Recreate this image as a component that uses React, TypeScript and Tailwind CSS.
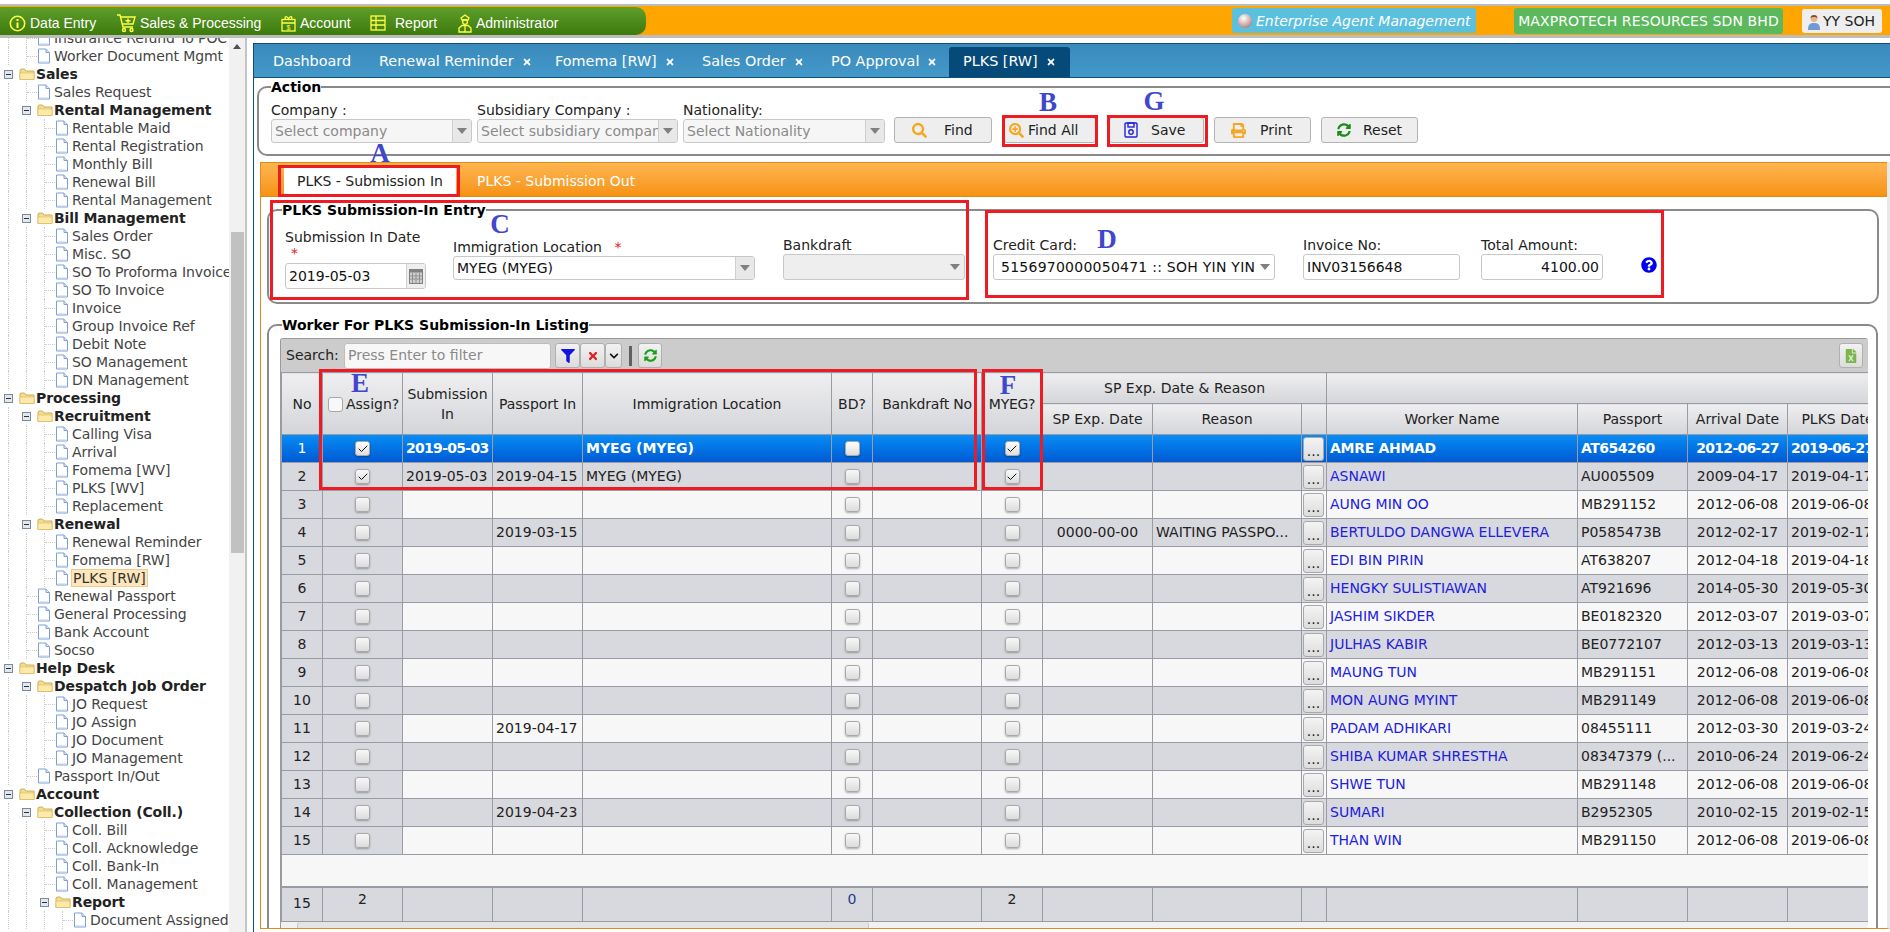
import { Check } from "lucide-react";
import {
  FaChevronDown,
  FaFileExcel,
  FaFilter,
  FaPrint,
  FaQuestionCircle,
  FaSearch,
  FaSearchPlus,
  FaSyncAlt,
  FaTimes,
} from "react-icons/fa";
import type { ReactNode } from "react";

const SANS = "[font-family:'DejaVu_Sans',sans-serif]";

type TreeRow = { label: string; depth: number; folder?: boolean; selected?: boolean };

const TREE: TreeRow[] = [
  { label: "Insurance Refund To POC", depth: 1 },
  { label: "Worker Document Mgmt", depth: 1 },
  { label: "Sales", depth: 0, folder: true },
  { label: "Sales Request", depth: 1 },
  { label: "Rental Management", depth: 1, folder: true },
  { label: "Rentable Maid", depth: 2 },
  { label: "Rental Registration", depth: 2 },
  { label: "Monthly Bill", depth: 2 },
  { label: "Renewal Bill", depth: 2 },
  { label: "Rental Management", depth: 2 },
  { label: "Bill Management", depth: 1, folder: true },
  { label: "Sales Order", depth: 2 },
  { label: "Misc. SO", depth: 2 },
  { label: "SO To Proforma Invoice", depth: 2 },
  { label: "SO To Invoice", depth: 2 },
  { label: "Invoice", depth: 2 },
  { label: "Group Invoice Ref", depth: 2 },
  { label: "Debit Note", depth: 2 },
  { label: "SO Management", depth: 2 },
  { label: "DN Management", depth: 2 },
  { label: "Processing", depth: 0, folder: true },
  { label: "Recruitment", depth: 1, folder: true },
  { label: "Calling Visa", depth: 2 },
  { label: "Arrival", depth: 2 },
  { label: "Fomema [WV]", depth: 2 },
  { label: "PLKS [WV]", depth: 2 },
  { label: "Replacement", depth: 2 },
  { label: "Renewal", depth: 1, folder: true },
  { label: "Renewal Reminder", depth: 2 },
  { label: "Fomema [RW]", depth: 2 },
  { label: "PLKS [RW]", depth: 2, selected: true },
  { label: "Renewal Passport", depth: 1 },
  { label: "General Processing", depth: 1 },
  { label: "Bank Account", depth: 1 },
  { label: "Socso", depth: 1 },
  { label: "Help Desk", depth: 0, folder: true },
  { label: "Despatch Job Order", depth: 1, folder: true },
  { label: "JO Request", depth: 2 },
  { label: "JO Assign", depth: 2 },
  { label: "JO Document", depth: 2 },
  { label: "JO Management", depth: 2 },
  { label: "Passport In/Out", depth: 1 },
  { label: "Account", depth: 0, folder: true },
  { label: "Collection (Coll.)", depth: 1, folder: true },
  { label: "Coll. Bill", depth: 2 },
  { label: "Coll. Acknowledge", depth: 2 },
  { label: "Coll. Bank-In", depth: 2 },
  { label: "Coll. Management", depth: 2 },
  { label: "Report", depth: 2, folder: true },
  { label: "Document Assigned", depth: 3 },
];

type Worker = {
  name: string;
  passport: string;
  arrival: string;
  plks: string;
  passportIn?: string;
  spDate?: string;
  reason?: string;
};

const WORKERS: Worker[] = [
  { name: "AMRE AHMAD", passport: "AT654260", arrival: "2012-06-27", plks: "2019-06-27" },
  { name: "ASNAWI", passport: "AU005509", arrival: "2009-04-17", plks: "2019-04-17", passportIn: "2019-04-15" },
  { name: "AUNG MIN OO", passport: "MB291152", arrival: "2012-06-08", plks: "2019-06-08" },
  {
    name: "BERTULDO DANGWA ELLEVERA",
    passport: "P0585473B",
    arrival: "2012-02-17",
    plks: "2019-02-17",
    passportIn: "2019-03-15",
    spDate: "0000-00-00",
    reason: "WAITING PASSPO...",
  },
  { name: "EDI BIN PIRIN", passport: "AT638207", arrival: "2012-04-18", plks: "2019-04-18" },
  { name: "HENGKY SULISTIAWAN", passport: "AT921696", arrival: "2014-05-30", plks: "2019-05-30" },
  { name: "JASHIM SIKDER", passport: "BE0182320", arrival: "2012-03-07", plks: "2019-03-07" },
  { name: "JULHAS KABIR", passport: "BE0772107", arrival: "2012-03-13", plks: "2019-03-13" },
  { name: "MAUNG TUN", passport: "MB291151", arrival: "2012-06-08", plks: "2019-06-08" },
  { name: "MON AUNG MYINT", passport: "MB291149", arrival: "2012-06-08", plks: "2019-06-08" },
  { name: "PADAM ADHIKARI", passport: "08455111", arrival: "2012-03-30", plks: "2019-03-24", passportIn: "2019-04-17" },
  { name: "SHIBA KUMAR SHRESTHA", passport: "08347379 (...", arrival: "2010-06-24", plks: "2019-06-24" },
  { name: "SHWE TUN", passport: "MB291148", arrival: "2012-06-08", plks: "2019-06-08" },
  { name: "SUMARI", passport: "B2952305", arrival: "2010-02-15", plks: "2019-02-15", passportIn: "2019-04-23" },
  { name: "THAN WIN", passport: "MB291150", arrival: "2012-06-08", plks: "2019-06-08" },
];

const COLS = [41, 80, 90, 90, 249, 41, 109, 61, 110, 149, 25, 251, 110, 100, 100];

function FolderIcon() {
  return (
    <svg width="16" height="14" viewBox="0 0 16 14" className="shrink-0">
      <path d="M1 3 L1 12.5 L15 12.5 L15 4 L7 4 L5.5 2 L2 2 Z" fill="#f6dc8a" stroke="#cfae55" />
      <path d="M1 6 L15 6 L15 12.5 L1 12.5 Z" fill="#fbeaa9" stroke="#d8b964" strokeWidth="0.6" />
    </svg>
  );
}

function FileIcon() {
  return (
    <svg width="14" height="16" viewBox="0 0 14 16" className="shrink-0">
      <path d="M1.5 1 L9 1 L12.5 4.5 L12.5 15 L1.5 15 Z" fill="#ffffff" stroke="#7f9fd6" />
      <path d="M9 1 L9 4.5 L12.5 4.5" fill="#dbe6f8" stroke="#7f9fd6" />
      <path d="M2.5 14 L11.5 14" stroke="#bcd0ee" />
    </svg>
  );
}

function TreeItem({ row }: { row: TreeRow }) {
  return (
    <div className="flex h-[18px] items-center whitespace-nowrap">
      {Array.from({ length: row.depth }).map((_, i) => (
        <span key={i} className="h-full w-[18px] shrink-0 pl-[8px]">
          <span className="block h-full w-px border-l border-dotted border-[#cccccc]" />
        </span>
      ))}
      <span className="flex h-full w-[18px] shrink-0 items-center pl-[4px]">
        {row.folder ? (
          <span className="flex h-[9px] w-[9px] items-center justify-center border border-[#7a8a99] bg-[#e4e8ec]">
            <span className="h-px w-[5px] bg-[#223344]" />
          </span>
        ) : (
          <span className="ml-[4px] flex h-full items-center border-l border-dotted border-[#cccccc]">
            <span className="w-[10px] border-t border-dotted border-[#cccccc]" />
          </span>
        )}
      </span>
      <span className="flex w-[18px] shrink-0 items-center pl-px">
        {row.folder ? <FolderIcon /> : <FileIcon />}
      </span>
      <span
        className={
          row.folder
            ? "text-[14px] font-bold tracking-[-0.1px] text-[#222222]"
            : row.selected
              ? "-ml-px border border-[#f5c98a] bg-[#fde6bb] px-px text-[14px] leading-[16px] text-[#333333]"
              : "text-[14px] tracking-[-0.1px] text-[#444444]"
        }
      >
        {row.label}
      </span>
    </div>
  );
}

function Sidebar() {
  return (
    <aside className="flex h-full w-[245px] shrink-0 overflow-hidden">
      <div className="h-full w-[229px] shrink-0 overflow-hidden">
        <div className="-mt-[9px]">
          {TREE.map((row, i) => (
            <TreeItem key={i} row={row} />
          ))}
        </div>
      </div>
      <div className="flex h-full w-[16px] shrink-0 flex-col items-center bg-[#f1f1f1]">
        <span className="mt-[6px] h-0 w-0 border-x-[4px] border-b-[5px] border-x-transparent border-b-[#505050]" />
        <span className="mt-[183px] h-[321px] w-[13px] bg-[#c1c1c1]" />
      </div>
    </aside>
  );
}

function MenuItem({ icon, label, className }: { icon: ReactNode; label: string; className: string }) {
  return (
    <span className={`flex items-center gap-[4px] ${className}`}>
      {icon}
      <span>{label}</span>
    </span>
  );
}

function TopBar() {
  const y = "#ffff44";
  return (
    <header className="mt-[4px] flex h-[34px] shrink-0 items-center border-t-[2px] border-b-[3px] border-[#bdbdbd] bg-[#ffa500]">
      <nav className="flex h-[28px] w-[646px] shrink-0 items-center rounded-r-[10px] bg-gradient-to-b from-[#5f9f2a] to-[#3c7a0c] pl-[9px] pt-[5px] font-['Liberation_Sans',sans-serif] text-[14px] text-white">
        <MenuItem
          className="w-[107px]"
          label="Data Entry"
          icon={
            <svg width="17" height="17" viewBox="0 0 17 17">
              <circle cx="8.5" cy="8.5" r="7.2" fill="none" stroke={y} strokeWidth="1.5" />
              <path d="M8.5 7.5 V13 M8.5 4 V6" stroke={y} strokeWidth="2" />
            </svg>
          }
        />
        <MenuItem
          className="w-[165px]"
          label="Sales & Processing"
          icon={
            <svg width="20" height="20" viewBox="0 0 20 20" fill="none" stroke={y} strokeWidth="1.4">
              <path d="M1 2 H4 L7 14 H17" />
              <path d="M5 4 H19 L17 11 H6.5" />
              <path d="M12 5.5 V10 M9.5 7.7 H14.5" />
              <circle cx="8" cy="17" r="1.5" />
              <circle cx="15.5" cy="17" r="1.5" />
            </svg>
          }
        />
        <MenuItem
          className="w-[89px]"
          label="Account"
          icon={
            <svg width="15" height="17" viewBox="0 0 15 17" fill="none" stroke={y} strokeWidth="1.3">
              <rect x="1" y="4.5" width="13" height="11.5" />
              <path d="M1 8 H14 M4.5 4.5 C3 1 6 0.5 7.5 4 C9 0.5 12 1 10.5 4.5" />
              <text x="7.5" y="14.5" fontSize="7" textAnchor="middle" fill={y} stroke="none">
                $
              </text>
            </svg>
          }
        />
        <MenuItem
          className="w-[88px] gap-[9px]"
          label="Report"
          icon={
            <svg width="16" height="16" viewBox="0 0 16 16" fill="none" stroke={y} strokeWidth="1.3">
              <rect x="1" y="1" width="14" height="14" />
              <path d="M1 5.5 H15 M1 10 H15 M6 1 V15" />
            </svg>
          }
        />
        <MenuItem
          className=""
          label="Administrator"
          icon={
            <svg width="14" height="19" viewBox="0 0 14 19" fill="none" stroke={y} strokeWidth="1.3">
              <path d="M3 4 L7 1 L11 4 L10 6 H4 Z" />
              <circle cx="7" cy="8" r="2.4" />
              <path d="M1 18 V14 L4 11.5 H10 L13 14 V18 Z M7 11.5 V18" />
            </svg>
          }
        />
      </nav>
      <span className="ml-[586px] flex h-[25px] w-[244px] shrink-0 items-center gap-[4px] rounded-[3px] bg-[#5bc0de] pl-[6px] text-[14px] italic text-white">
        <span className="h-[14px] w-[14px] shrink-0 rounded-full bg-[radial-gradient(circle_at_40%_30%,#ffffff,#c9a0a0_60%,#8a5a5a)]" />
        <span className="whitespace-nowrap pt-[2px]">Enterprise Agent Management</span>
      </span>
      <span className="ml-[38px] flex h-[26px] w-[269px] shrink-0 items-center justify-center whitespace-nowrap rounded-[3px] bg-[#5cb85c] pt-[2px] text-[14px] tracking-[0.1px] text-white">
        MAXPROTECH RESOURCES SDN BHD
      </span>
      <span className="ml-[19px] flex h-[24px] w-[80px] shrink-0 items-center gap-[2px] rounded-[3px] bg-[#eeeeee] pl-[5px] pt-[1px] text-[14px] text-[#222222]">
        <svg width="14" height="17" viewBox="0 0 14 17" className="shrink-0">
          <path d="M1 17 C1 11 3 10 7 10 C11 10 13 11 13 17 Z" fill="#6f9ad6" />
          <circle cx="7" cy="5.5" r="3.4" fill="#eab38c" />
          <path d="M3.5 5 C3.5 1 10.5 1 10.5 5 C9 3.5 5 3.5 3.5 5 Z" fill="#8a4b22" />
        </svg>
        YY SOH
      </span>
    </header>
  );
}

const TABS: { label: string; w: string; close?: boolean }[] = [
  { label: "Dashboard", w: "w-[106px]" },
  { label: "Renewal Reminder", w: "w-[176px]", close: true },
  { label: "Fomema [RW]", w: "w-[147px]", close: true },
  { label: "Sales Order", w: "w-[129px]", close: true },
  { label: "PO Approval", w: "w-[118px]", close: true },
];

function TabBar() {
  return (
    <div className="flex h-[35px] shrink-0 items-end border-y border-[#0d4f7c] bg-gradient-to-b from-[#3a8abc] to-[#4399c9] pl-[19px] text-[14.4px] text-white">
      {TABS.map((t) => (
        <span key={t.label} className={`flex h-full items-center gap-[8px] whitespace-nowrap pt-[2px] ${t.w}`}>
          {t.label}
          {t.close && <FaTimes className="h-[10px] w-[10px]" />}
        </span>
      ))}
      <span className="flex h-[30px] w-[121px] items-center gap-[8px] whitespace-nowrap rounded-t-[3px] bg-[#054a78] pl-[14px]">
        PLKS [RW]
        <FaTimes className="h-[10px] w-[10px]" />
      </span>
    </div>
  );
}

function SelectBox({
  value,
  placeholder,
  className,
  divider = true,
  filled,
}: {
  value?: string;
  placeholder?: string;
  className: string;
  divider?: boolean;
  filled?: boolean;
}) {
  return (
    <div
      className={`flex overflow-hidden rounded-[3px] border border-[#c8c8c8] text-[14px] ${filled ? "bg-[#eeeeee]" : placeholder ? "bg-[#f6f6f6]" : "bg-white"} ${className}`}
    >
      <span className={`min-w-0 flex-1 overflow-hidden whitespace-nowrap pl-[3px] leading-[22px] ${placeholder ? "text-[#8a8a8a]" : "text-[#111111]"}`}>
        {value ?? placeholder}
      </span>
      <span className={`flex w-[19px] shrink-0 items-center justify-center ${divider ? "border-l border-[#cfcfcf] bg-[#e8e8e8]" : ""}`}>
        <span className="h-0 w-0 border-x-[5px] border-t-[6px] border-x-transparent border-t-[#808080]" />
      </span>
    </div>
  );
}

function ActionButton({ icon, label, className = "" }: { icon: ReactNode; label: string; className?: string }) {
  return (
    <button className={`flex h-[26px] shrink-0 items-center rounded-[3px] border border-[#b4b4b4] bg-[#eeeeee] text-[14px] text-[#222222] ${className}`}>
      {icon}
      {label}
    </button>
  );
}

function ActionPanel() {
  return (
    <fieldset className="ml-[3px] h-[78px] min-w-0 shrink-0 rounded-l-[10px] border-y-2 border-l-2 border-[#8a8a8a]">
      <legend className="ml-[12px] text-[14px] font-bold leading-[18px] text-black">Action</legend>
      <div className="flex items-end pl-[12px] pt-[6px] text-[14px] text-[#222222]">
        <div className="w-[201px]">
          <div className="whitespace-nowrap leading-[17px]">Company :</div>
          <SelectBox placeholder="Select company" className="h-[24px]" />
        </div>
        <div className="ml-[5px] w-[201px]">
          <div className="whitespace-nowrap leading-[17px]">Subsidiary Company :</div>
          <SelectBox placeholder="Select subsidiary company" className="h-[24px]" />
        </div>
        <div className="ml-[5px] w-[202px]">
          <div className="whitespace-nowrap leading-[17px]">Nationality:</div>
          <SelectBox placeholder="Select Nationality" className="h-[24px]" />
        </div>
        <ActionButton
          className="ml-[9px] w-[98px] gap-[17px] pl-[17px]"
          label="Find"
          icon={<FaSearch className="h-[15px] w-[15px] text-[#f5a623]" />}
        />
        <ActionButton
          className="ml-[12px] w-[92px] gap-[4px] pl-[4px]"
          label="Find All"
          icon={<FaSearchPlus className="h-[15px] w-[15px] text-[#f5a623]" />}
        />
        <ActionButton
          className="ml-[13px] w-[95px] gap-[13px] pl-[14px]"
          label="Save"
          icon={
            <svg width="14" height="16" viewBox="0 0 14 16" fill="none" stroke="#2222dd" strokeWidth="1.4">
              <rect x="1" y="1" width="12" height="14" rx="1" />
              <rect x="4" y="1" width="6" height="4" />
              <circle cx="7" cy="10" r="2.2" />
            </svg>
          }
        />
        <ActionButton
          className="ml-[10px] w-[97px] gap-[14px] pl-[16px]"
          label="Print"
          icon={<FaPrint className="h-[15px] w-[15px] text-[#f5a623]" />}
        />
        <ActionButton
          className="ml-[10px] w-[97px] gap-[12px] pl-[15px]"
          label="Reset"
          icon={<FaSyncAlt className="h-[14px] w-[14px] text-[#1a8a1a]" />}
        />
      </div>
    </fieldset>
  );
}

function EntryPanel() {
  return (
    <fieldset className="ml-[6px] mr-[8px] h-[103px] min-w-0 shrink-0 rounded-[10px] border-2 border-[#8a8a8a]">
      <legend className="ml-[13px] text-[14px] font-bold leading-[18px] text-black">PLKS Submission-In Entry</legend>
      <div className="flex items-start pl-[16px] text-[14px] text-[#222222]">
        <div className="mt-[9px] w-[141px]">
          <div className="whitespace-nowrap leading-[18px]">Submission In Date</div>
          <div className="pl-[6px] text-[14px] leading-[15px] text-[#e02020]">*</div>
          <div className="mt-[2px] flex h-[26px] overflow-hidden rounded-[3px] border border-[#c8c8c8] bg-white">
            <span className="flex-1 pl-[3px] leading-[25px] text-[#111111]">2019-05-03</span>
            <span className="flex w-[19px] items-center justify-center border-l border-[#cfcfcf] bg-[#eeeeee]">
              <svg width="14" height="15" viewBox="0 0 14 15">
                <rect x="0.5" y="0.5" width="13" height="14" fill="#d0d0d0" stroke="#808080" />
                <rect x="0.5" y="0.5" width="13" height="3" fill="#808080" />
                <path d="M3.5 4 V14 M7 4 V14 M10.5 4 V14 M1 7 H13 M1 10 H13" stroke="#909090" />
              </svg>
            </span>
          </div>
        </div>
        <div className="ml-[27px] mt-[19px] w-[302px]">
          <div className="whitespace-nowrap leading-[18px]">
            Immigration Location <span className="ml-[8px] text-[#e02020]">*</span>
          </div>
          <SelectBox value="MYEG (MYEG)" className="h-[24px]" />
        </div>
        <div className="ml-[28px] mt-[17px] w-[182px]">
          <div className="whitespace-nowrap leading-[18px]">Bankdraft</div>
          <SelectBox value="" className="h-[26px]" divider={false} filled />
        </div>
        <div className="ml-[28px] mt-[17px] w-[282px]">
          <div className="whitespace-nowrap leading-[18px]">Credit Card:</div>
          <SelectBox
            value="5156970000050471 :: SOH YIN YIN"
            className="h-[26px] tracking-[0.25px] [&>span:first-child]:pl-[7px] [&>span:first-child]:pr-[9px] [&>span:first-child]:leading-[24px]"
            divider={false}
          />
        </div>
        <div className="ml-[28px] mt-[17px] w-[157px]">
          <div className="whitespace-nowrap leading-[18px]">Invoice No:</div>
          <div className="h-[26px] rounded-[3px] border border-[#c8c8c8] bg-white pl-[3px] leading-[24px] text-[#111111]">INV03156648</div>
        </div>
        <div className="ml-[21px] mt-[17px] w-[122px]">
          <div className="whitespace-nowrap leading-[18px]">Total Amount:</div>
          <div className="h-[26px] rounded-[3px] border border-[#c8c8c8] bg-white pr-[3px] text-right leading-[24px] text-[#111111]">4100.00</div>
        </div>
        <FaQuestionCircle className="ml-[38px] mt-[38px] h-[16px] w-[16px] text-[#0000ee]" />
      </div>
    </fieldset>
  );
}

function CheckBox({ checked, bright }: { checked?: boolean; bright?: boolean }) {
  return (
    <span className={`mx-auto flex h-[15px] w-[15px] items-center justify-center rounded-[3px] border border-[#a8a8a8] bg-gradient-to-b ${bright ? "from-white to-[#dddddd]" : "from-[#f8f8f8] to-[#dcdcdc]"} shadow-[0_1px_2px_rgba(0,0,0,0.3)]`}>
      {checked && <Check className="h-[12px] w-[12px] text-[#111111]" strokeWidth={2} />}
    </span>
  );
}

const TH = "border border-[#9a9ca3] bg-gradient-to-b from-[#efeff1] to-[#d4d5d9] px-[2px] text-center text-[14px] font-normal leading-[20px] text-[#222222]";
const FOOT = "border border-t-2 border-[#9a9ca3]";

function ToolBtn({ children, className = "" }: { children: ReactNode; className?: string }) {
  return (
    <span className={`flex h-[25px] shrink-0 items-center justify-center rounded-[3px] border border-[#b0b0b0] bg-gradient-to-b from-[#f2f2f2] to-[#dcdcdc] ${className}`}>
      {children}
    </span>
  );
}

function WorkerTable() {
  return (
    <div className="ml-[11px] mr-[8px] overflow-hidden rounded-t-[3px] border-t border-l border-[#9a9a9a] bg-[#f7f7f7]">
      <div className="flex h-[33px] items-center bg-[#cccccc] pl-[5px] pr-[5px] text-[14px] text-[#222222]">
        <span className="w-[58px] shrink-0 whitespace-nowrap">Search:</span>
        <span className="h-[26px] w-[207px] shrink-0 rounded-[3px] border border-[#bdbdbd] bg-[#f7f7f7] pl-[3px] leading-[23px] text-[#8a8a8a]">
          Press Enter to filter
        </span>
        <ToolBtn className="ml-[4px] w-[25px]">
          <FaFilter className="h-[14px] w-[14px] text-[#1414e0]" />
        </ToolBtn>
        <ToolBtn className="w-[25px]">
          <FaTimes className="h-[12px] w-[12px] text-[#e02020]" />
        </ToolBtn>
        <ToolBtn className="w-[17px]">
          <FaChevronDown className="h-[10px] w-[10px] text-[#111111]" />
        </ToolBtn>
        <span className="ml-[7px] h-[20px] w-[3px] shrink-0 bg-[#606060]" />
        <ToolBtn className="ml-[6px] w-[24px]">
          <FaSyncAlt className="h-[13px] w-[13px] text-[#18a018]" />
        </ToolBtn>
        <ToolBtn className="ml-auto w-[24px]">
          <FaFileExcel className="h-[14px] w-[14px] text-[#7ab648]" />
        </ToolBtn>
      </div>
      <div className="h-[550px] overflow-hidden">
        <table className="w-[1606px] table-fixed border-collapse text-[14px] text-[#222222]">
          <colgroup>
            {COLS.map((w, i) => (
              <col key={i} style={{ width: w }} />
            ))}
          </colgroup>
          <thead>
            <tr className="h-[31px]">
              <th rowSpan={2} className={TH}>No</th>
              <th rowSpan={2} className={TH}>
                <span className="flex items-center whitespace-nowrap pl-[3px] pt-[1px]">
                  <span className="mr-[3px] h-[15px] w-[15px] shrink-0 rounded-[3px] border border-[#a8a8a8] bg-[#f8f8f8]" />
                  Assign?
                </span>
              </th>
              <th rowSpan={2} className={TH}>Submission In</th>
              <th rowSpan={2} className={TH}>Passport In</th>
              <th rowSpan={2} className={TH}>Immigration Location</th>
              <th rowSpan={2} className={TH}>BD?</th>
              <th rowSpan={2} className={`${TH} whitespace-nowrap tracking-[-0.2px]`}>Bankdraft No</th>
              <th rowSpan={2} className={`${TH} tracking-[-0.3px]`}>MYEG?</th>
              <th colSpan={3} className={TH}>SP Exp. Date &amp; Reason</th>
              <th colSpan={4} className={TH}></th>
            </tr>
            <tr className="h-[31px]">
              <th className={TH}>SP Exp. Date</th>
              <th className={TH}>Reason</th>
              <th className={TH}></th>
              <th className={TH}>Worker Name</th>
              <th className={TH}>Passport</th>
              <th className={`${TH} whitespace-nowrap`}>Arrival Date</th>
              <th className={`${TH} whitespace-nowrap`}>PLKS Date</th>
            </tr>
          </thead>
          <tbody>
            {WORKERS.map((w, i) => (
              <WorkerRow key={w.name} worker={w} index={i} />
            ))}
            <tr className="h-[32px] bg-[#f7f7f7]">
              <td colSpan={15} className="border border-[#9a9ca3]"></td>
            </tr>
            <tr className="h-[35px] bg-[#d8d9de] text-center">
              <td className={`${FOOT} pb-[2px]`}>15</td>
              <td className={`${FOOT} pb-[10px]`}>2</td>
              <td className={FOOT}></td>
              <td className={FOOT}></td>
              <td className={FOOT}></td>
              <td className={`${FOOT} pb-[10px] text-[#1a3f8a]`}>0</td>
              <td className={FOOT}></td>
              <td className={`${FOOT} pb-[10px]`}>2</td>
              {Array.from({ length: 7 }).map((_, i) => (
                <td key={i} className={FOOT}></td>
              ))}
            </tr>
          </tbody>
        </table>
      </div>
      <div className="flex h-[8px] bg-[#f1f1f1]">
        <span className="ml-[16px] h-full w-[572px] rounded-t-[3px] border-x border-[#c8c8c8] bg-[#e4e4e4]" />
      </div>
    </div>
  );
}

function WorkerRow({ worker, index }: { worker: Worker; index: number }) {
  const selected = index === 0;
  const checked = index < 2;
  const rowBg = selected
    ? "bg-gradient-to-b from-[#0a8cf5] to-[#0458d2] font-bold text-white"
    : index % 2 === 1
      ? "bg-[#d8d9de]"
      : "bg-[#f7f7f7]";
  const frozen = selected ? "" : "bg-[#d8d9de]";
  const td = "overflow-hidden whitespace-nowrap border border-[#9a9ca3] px-[3px]";
  const date = selected ? "tracking-[-0.7px]" : "";
  return (
    <tr className={`h-[28px] ${rowBg}`}>
      <td className={`${td} text-center font-normal ${frozen}`}>{index + 1}</td>
      <td className={`${td} ${frozen}`}>
        <CheckBox checked={checked} bright={selected} />
      </td>
      <td className={`${td} ${date}`}>{checked ? "2019-05-03" : ""}</td>
      <td className={td}>{worker.passportIn}</td>
      <td className={td}>{checked ? "MYEG (MYEG)" : ""}</td>
      <td className={td}>
        <CheckBox bright={selected} />
      </td>
      <td className={td}></td>
      <td className={td}>
        <CheckBox checked={checked} bright={selected} />
      </td>
      <td className={`${td} text-center`}>{worker.spDate}</td>
      <td className={td}>{worker.reason}</td>
      <td className={`${td} !px-[1px]`}>
        <span className="flex h-[24px] w-[21px] items-end justify-center rounded-[3px] border border-[#a8a8a8] bg-gradient-to-b from-[#f4f4f4] to-[#dcdcdc] font-normal leading-[18px] text-[#222222]">
          ...
        </span>
      </td>
      <td className={`${td} ${selected ? "tracking-[-0.3px]" : "text-[#2020dd]"}`}>{worker.name}</td>
      <td className={`${td} ${selected ? "tracking-[-0.5px]" : ""}`}>{worker.passport}</td>
      <td className={`${td} text-center ${date}`}>{worker.arrival}</td>
      <td className={`${td} ${date}`}>{worker.plks}</td>
    </tr>
  );
}

const MARKS: { x: number; y: number; w: number; h: number }[] = [
  { x: 278, y: 165, w: 182, h: 32 },
  { x: 1002, y: 115, w: 96, h: 32 },
  { x: 1107, y: 115, w: 101, h: 32 },
  { x: 270, y: 200, w: 699, h: 100 },
  { x: 985, y: 210, w: 679, h: 88 },
  { x: 319, y: 369, w: 658, h: 121 },
  { x: 982, y: 369, w: 61, h: 121 },
];

const LETTERS: { t: string; x: number; y: number }[] = [
  { t: "A", x: 380, y: 153 },
  { t: "B", x: 1048, y: 102 },
  { t: "G", x: 1154, y: 101 },
  { t: "C", x: 500, y: 224 },
  { t: "D", x: 1107, y: 239 },
  { t: "E", x: 360, y: 383 },
  { t: "F", x: 1008, y: 385 },
];

export default function App() {
  return (
    <div className={`relative flex h-[932px] w-[1890px] flex-col overflow-hidden bg-white ${SANS}`}>
      <TopBar />
      <div className="flex min-h-0 flex-1">
        <Sidebar />
        <div className="h-full w-[8px] shrink-0 border-l-2 border-[#c4c4c4] bg-white" />
        <main className="mt-[5px] flex min-w-0 flex-1 flex-col border-l border-[#0d4f7c]">
          <TabBar />
          <ActionPanel />
          <section className="ml-[6px] mt-[6px] flex h-[767px] min-w-0 shrink-0 flex-col overflow-hidden border-b border-l border-r-[3px] border-b-[#dd8a1f] border-l-[#dd8a1f] border-r-[#e8e8e8]">
            <div className="flex h-[35px] shrink-0 items-end border-y border-[#e08a18] bg-gradient-to-b from-[#fdb64e] to-[#f7920e] pl-[23px] text-[14px]">
              <span className="flex h-[30px] w-[172px] items-center justify-center whitespace-nowrap bg-white text-[#222222]">
                PLKS - Submission In
              </span>
              <span className="ml-[21px] flex h-[30px] items-center whitespace-nowrap text-white">
                PLKS - Submission Out
              </span>
            </div>
            <div className="mt-[4px]">
              <EntryPanel />
            </div>
            <fieldset className="ml-[6px] mr-[9px] mt-[12px] h-[700px] min-w-0 shrink-0 rounded-[10px] border-2 border-[#8a8a8a]">
              <legend className="ml-[13px] text-[14px] font-bold leading-[18px] text-black">
                Worker For PLKS Submission-In Listing
              </legend>
              <div className="pt-[4px]">
                <WorkerTable />
              </div>
            </fieldset>
          </section>
        </main>
      </div>
      {MARKS.map((m, i) => (
        <span
          key={i}
          className="pointer-events-none absolute border-[3px] border-[#ed1c24]"
          style={{ left: m.x, top: m.y, width: m.w, height: m.h }}
        />
      ))}
      {LETTERS.map((l) => (
        <span
          key={l.t}
          className="pointer-events-none absolute -translate-x-1/2 -translate-y-1/2 font-['Liberation_Serif',serif] text-[27px] font-bold leading-none text-[#3f48cc]"
          style={{ left: l.x, top: l.y }}
        >
          {l.t}
        </span>
      ))}
    </div>
  );
}
